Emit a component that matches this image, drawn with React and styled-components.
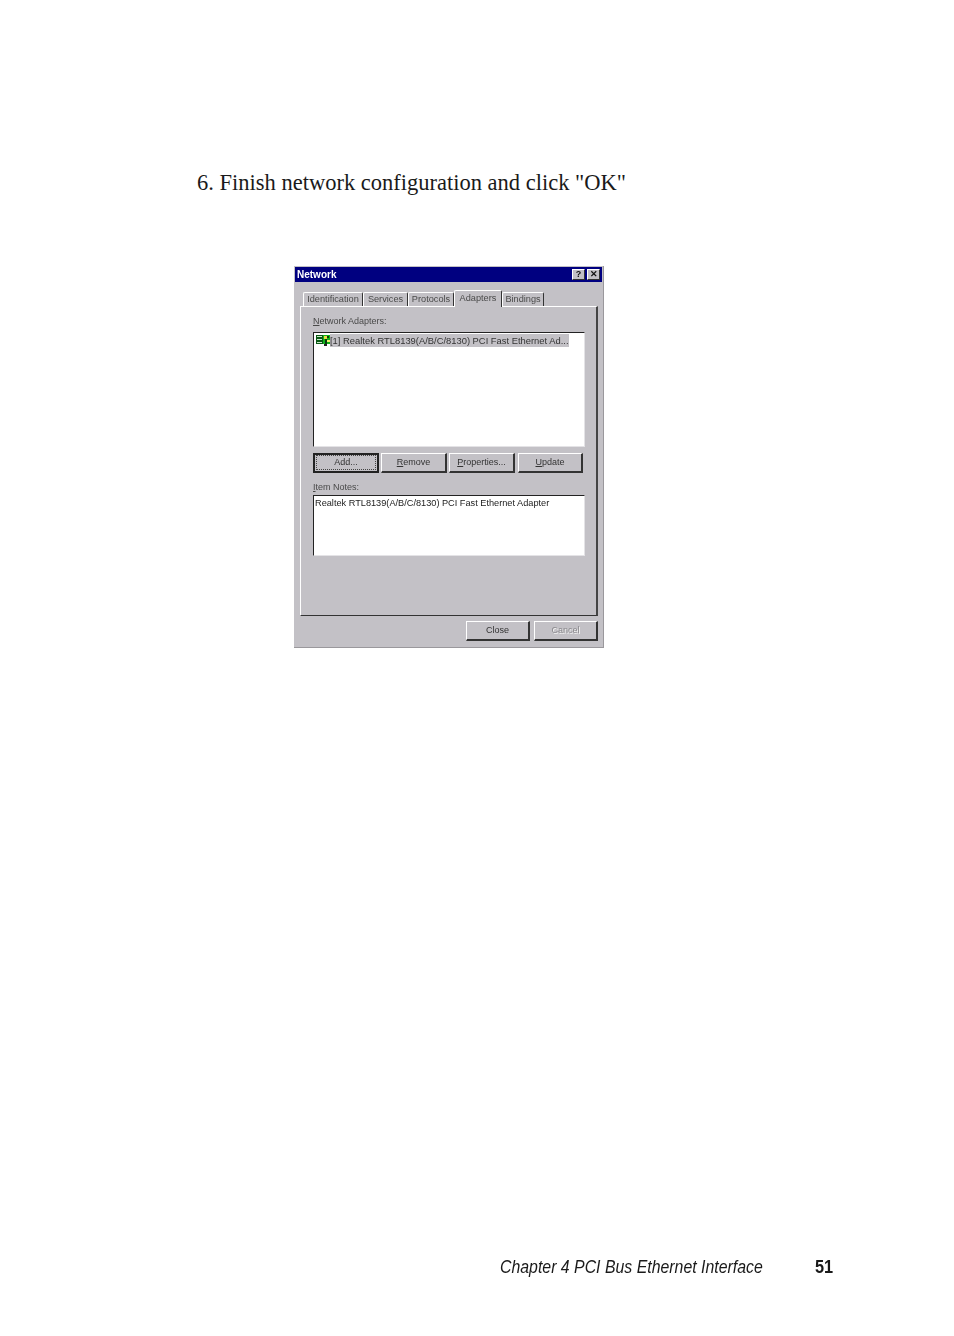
import React from "react";
import styled, { createGlobalStyle } from "styled-components";

const Global = createGlobalStyle`
  html, body { margin: 0; padding: 0; background: #fff; }
`;

const Page = styled.div`
  width: 954px;
  height: 1336px;
  display: flex;
  flex-direction: column;
  overflow: hidden;
`;

const Heading = styled.h1`
  margin: 170px 0 0 197px;
  font: 400 22.5px/26px "Liberation Serif", serif;
  color: #1a1a1a;
`;

const Dialog = styled.div`
  box-sizing: border-box;
  width: 310px;
  height: 382px;
  margin: 70px 0 0 294px;
  padding: 1px;
  background: #c3c1c6;
  border-right: 1px solid #9a989c;
  border-bottom: 1px solid #9a989c;
  display: flex;
  flex-direction: column;
  font: 400 9px/12px "Liberation Sans", sans-serif;
  color: #2b2b2b;
  filter: blur(0.3px);
`;

const TitleBar = styled.div`
  height: 15px;
  background: #000080;
  color: #fff;
  font-weight: 700;
  font-size: 10px;
  line-height: 15px;
  padding: 0 2px;
  display: flex;
  align-items: center;
  justify-content: space-between;
`;

const TitleButtons = styled.div`
  display: flex;
  gap: 2px;
`;

const TitleButton = styled.div`
  box-sizing: border-box;
  width: 13px;
  height: 11px;
  background: #c3c1c6;
  border: 1px solid;
  border-color: #fff #333 #333 #fff;
  color: #111;
  font: 700 9px/9px "Liberation Sans", sans-serif;
  text-align: center;
`;

const TabRow = styled.div`
  display: flex;
  align-items: flex-end;
  height: 24px;
  margin-left: 8px;
  position: relative;
  z-index: 1;
`;

const Tab = styled.div`
  box-sizing: border-box;
  height: ${(p) => (p.$active ? 17 : 14)}px;
  width: ${(p) => p.$w}px;
  margin-bottom: ${(p) => (p.$active ? -1 : 0)}px;
  padding-top: ${(p) => (p.$active ? 1 : 0)}px;
  background: #c3c1c6;
  border-top: 1px solid #fff;
  border-left: 1px solid #fff;
  border-right: 1px solid #333;
  border-radius: 2px 2px 0 0;
  text-align: center;
  white-space: nowrap;
  font-size: 9.2px;
  line-height: 12px;
  color: #4a4a4a;
`;

const Panel = styled.div`
  box-sizing: border-box;
  width: 298px;
  height: 310px;
  margin-left: 5px;
  padding: 8px 13px 0 12px;
  background: #c3c1c6;
  border-top: 1px solid #fff;
  border-left: 1px solid #fff;
  border-right: 2px solid #444;
  border-bottom: 1px solid #333;
  display: flex;
  flex-direction: column;
`;

const Label = styled.div`
  height: 12px;
  margin-top: ${(p) => p.$mt || 0}px;
  line-height: 12px;
  color: #4a4a4a;
`;

const ListBox = styled.div`
  box-sizing: border-box;
  width: 272px;
  height: ${(p) => p.$h}px;
  margin-top: ${(p) => p.$mt}px;
  padding: ${(p) => p.$pad};
  background: #fff;
  border-top: 1px solid #222;
  border-left: 1px solid #222;
  border-right: 1px solid #e4e3e6;
  border-bottom: 1px solid #e4e3e6;
`;

const ListRow = styled.div`
  display: flex;
  align-items: center;
  height: 14px;
`;

const RowText = styled.div`
  width: 239px;
  box-sizing: border-box;
  background: #c3c1c6;
  font-size: 9.4px;
  line-height: 13px;
  white-space: nowrap;
  color: #333;
`;

const NoteText = styled.div`
  white-space: nowrap;
  font-size: 9.2px;
  line-height: 12px;
  color: #222;
`;

const ButtonRow = styled.div`
  display: flex;
  margin-top: 6px;
  gap: 2px;
`;

const Button = styled.div`
  box-sizing: border-box;
  width: ${(p) => p.$w || 66}px;
  height: 20px;
  margin-left: ${(p) => p.$ml || 0}px;
  padding-bottom: 1px;
  background: #c3c1c6;
  border-style: solid;
  border-width: ${(p) => (p.$default ? "2px" : "1px 2px 2px 1px")};
  border-color: ${(p) => (p.$default ? "#222" : "#fff #333 #333 #fff")};
  display: flex;
  align-items: center;
  justify-content: center;
  color: ${(p) => (p.$disabled ? "#8a898d" : "#333")};
  text-shadow: ${(p) => (p.$disabled ? "1px 1px 0 #f4f4f4" : "none")};
  white-space: nowrap;
`;

const FocusRing = styled.div`
  box-sizing: border-box;
  width: 100%;
  height: 100%;
  margin: 1px;
  border: 1px dotted #444;
  text-align: center;
  line-height: 12px;
`;

const Footer = styled.div`
  display: flex;
  justify-content: flex-end;
  gap: 4px;
  margin-top: 5px;
  padding-right: 4px;
`;

const PageFooter = styled.div`
  display: flex;
  align-items: baseline;
  margin: 608px 0 0 500px;
  font-family: "Liberation Sans", sans-serif;
  color: #1a1a1a;
`;

/* no narrow face installed, so the regular one is squeezed */
const Chapter = styled.span`
  display: inline-block;
  width: 315px;
  font-size: 19px;
  line-height: 22px;
  font-style: italic;
  white-space: nowrap;
  transform: scaleX(0.835);
  transform-origin: left;
`;

const PageNumber = styled.span`
  display: inline-block;
  font-size: 19px;
  line-height: 22px;
  font-weight: 700;
  transform: scaleX(0.86);
  transform-origin: left;
`;

const AdapterIcon = () => (
  <svg width="15" height="12" viewBox="0 0 15 12" shapeRendering="crispEdges">
    <rect x="1" y="1" width="7" height="9" fill="#0a5a14" />
    <rect x="2" y="2" width="5" height="1" fill="#c8e8c8" />
    <rect x="2" y="5" width="5" height="1" fill="#c8e8c8" />
    <rect x="2" y="8" width="5" height="1" fill="#c8e8c8" />
    <rect x="8" y="1" width="7" height="9" fill="#12b21a" />
    <rect x="9" y="2" width="3" height="3" fill="#e8e040" />
    <rect x="12" y="2" width="2" height="2" fill="#0a3a10" />
    <rect x="10" y="5" width="2" height="5" fill="#0a3a10" />
    <rect x="12" y="6" width="3" height="2" fill="#f0f070" />
    <rect x="9" y="10" width="3" height="2" fill="#222" />
  </svg>
);

const App = () => (
  <>
    <Global />
    <Page>
      <Heading>6. Finish network configuration and click "OK"</Heading>
      <Dialog>
        <TitleBar>
          <span>Network</span>
          <TitleButtons>
            <TitleButton>?</TitleButton>
            <TitleButton>✕</TitleButton>
          </TitleButtons>
        </TitleBar>
        <TabRow>
          <Tab $w={60}>Identification</Tab>
          <Tab $w={45}>Services</Tab>
          <Tab $w={46}>Protocols</Tab>
          <Tab $w={48} $active>Adapters</Tab>
          <Tab $w={42}>Bindings</Tab>
        </TabRow>
        <Panel>
          <Label><u>N</u>etwork Adapters:</Label>
          <ListBox $h={115} $mt={5} $pad="0 0 0 1px">
            <ListRow>
              <AdapterIcon />
              <RowText>[1] Realtek RTL8139(A/B/C/8130) PCI Fast Ethernet Ad...</RowText>
            </ListRow>
          </ListBox>
          <ButtonRow>
            <Button $default><FocusRing>Add...</FocusRing></Button>
            <Button><span><u>R</u>emove</span></Button>
            <Button><span><u>P</u>roperties...</span></Button>
            <Button $w={65} $ml={1}><span><u>U</u>pdate</span></Button>
          </ButtonRow>
          <Label $mt={8}><u>I</u>tem Notes:</Label>
          <ListBox $h={61} $mt={2} $pad="1px 0 0 1px">
            <NoteText>Realtek RTL8139(A/B/C/8130) PCI Fast Ethernet Adapter</NoteText>
          </ListBox>
        </Panel>
        <Footer>
          <Button $w={64}>Close</Button>
          <Button $w={64} $disabled>Cancel</Button>
        </Footer>
      </Dialog>
      <PageFooter>
        <Chapter>Chapter 4 PCI Bus Ethernet Interface</Chapter>
        <PageNumber>51</PageNumber>
      </PageFooter>
    </Page>
  </>
);

export default App;
